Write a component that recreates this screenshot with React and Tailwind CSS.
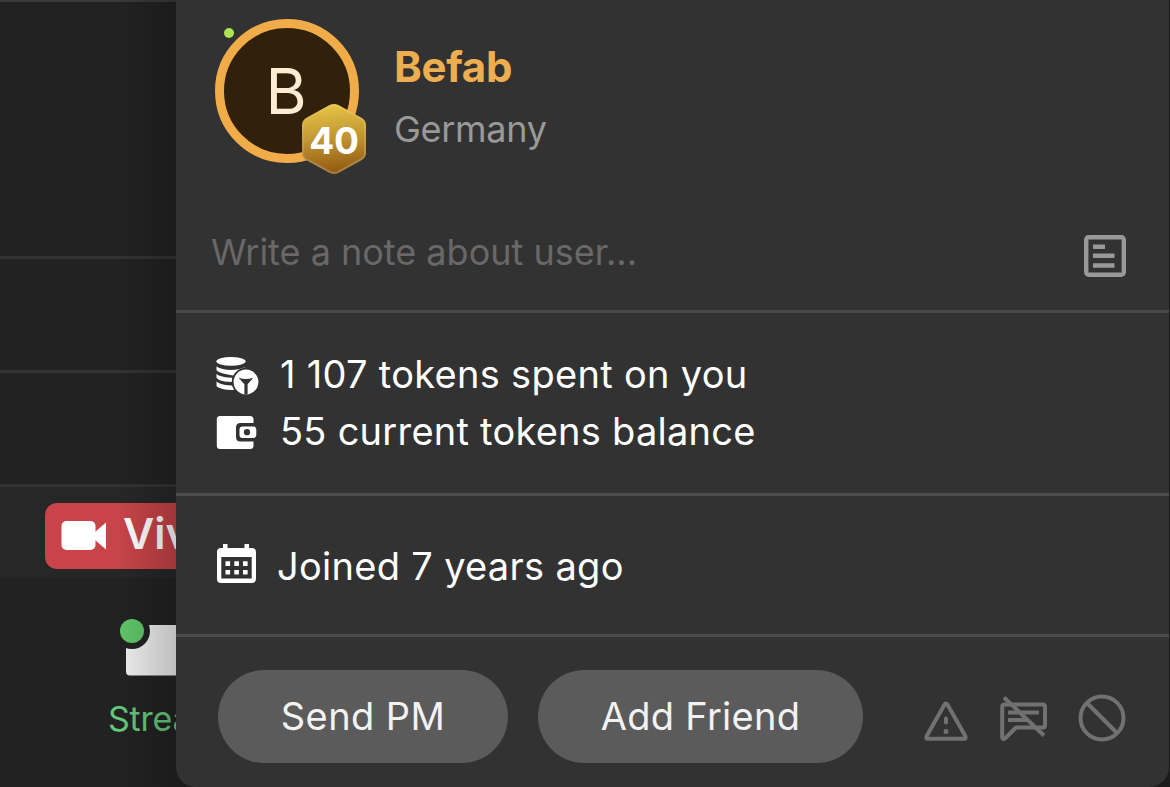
import React from 'react';

function TokensIcon() {
  return (
    <svg className="block h-[42px] w-[44px] shrink-0" viewBox="0 0 44 42" fill="none">
      <ellipse cx="16" cy="6.300" rx="14.600" ry="4.400" fill="#fff" />
      <path d="M1.500 11.500C5 13.800 10 14.900 16 14.900C21 14.900 26 14 29.500 12.300V20.500H18C11 19 4 18.500 1.500 15.100Z" fill="#fff" />
      <path d="M1.500 19C5 21.500 10 22.800 20 22.800V27C9 26.800 4 25.700 1.500 22.700Z" fill="#fff" />
      <path d="M1.500 26.500C5 29.200 10 30.500 20 30.500V35C9 35 4 33.500 1.500 31Z" fill="#fff" />
      <circle cx="31" cy="27" r="14.300" fill="#323232" />
      <circle cx="31" cy="27" r="12.400" fill="#fff" />
      <path d="M23.600 22.700Q31 25.100 38.400 22.700L32.600 29.200V39.400H29.400V29.200Z" fill="#323232" />
    </svg>
  );
}

function WalletIcon() {
  return (
    <svg className="block h-[36px] w-[44px] shrink-0" viewBox="0 0 44 36" fill="none">
      <path d="M5 1H35Q38.500 1 38.500 4.500V8H25.500Q21 8 21 12.500V22Q21 26.500 25.500 26.500H38.500V30.500Q38.500 34 35 34H5Q1.800 34 1.800 30.500V4.500Q1.800 1 5 1Z" fill="#fff" />
      <rect x="24.500" y="11.500" width="16.800" height="11.500" rx="3" fill="#fff" />
      <circle cx="32" cy="17.200" r="3.100" fill="#323232" />
    </svg>
  );
}

function CalendarIcon() {
  return (
    <svg className="block h-[42px] w-[44px] shrink-0" viewBox="0 0 44 42" fill="#fff">
      <path d="M8 1H12.500V5H29.500V1H34V5H36.500Q41 5 41 9V36Q41 40 36.500 40H6Q2 40 2 36V9Q2 5 6 5H8ZM6.300 14V35.500H36.700V14Z" fillRule="evenodd" />
      <path d="M10.500 18.300h4.600v4.600h-4.600zM19.300 18.300h4.600v4.600h-4.600zM28 18.300h4.600v4.600h-4.600zM10.500 27h4.600v4.600h-4.600zM19.300 27h4.600v4.600h-4.600zM28 27h4.600v4.600h-4.600z" />
    </svg>
  );
}

function NoteIcon() {
  return (
    <svg className="block size-[44px] shrink-0" viewBox="0 0 44 44" fill="none">
      <rect x="3.200" y="3.200" width="37.600" height="37.600" rx="2.500" stroke="#999" strokeWidth="4.400" />
      <path d="M10 12.700h12M10 21.800h21.500M10 31.500h21.500" stroke="#999" strokeWidth="4.600" />
    </svg>
  );
}

function WarningIcon() {
  return (
    <svg className="block h-[42px] w-[46px]" viewBox="0 0 46 42" fill="none" stroke="#717171">
      <path d="M21.300 5Q23 2.200 24.700 5L42.300 36Q43.500 38.800 41 38.800H5Q2.500 38.800 3.700 36Z" strokeWidth="4" strokeLinejoin="round" />
      <path d="M23 18.500V22.500" strokeWidth="4" strokeLinecap="round" />
      <path d="M23 29.200V33.800" strokeWidth="4.400" />
    </svg>
  );
}

function MuteChatIcon() {
  return (
    <svg className="block size-[50px]" viewBox="0 0 50 50" fill="none" stroke="#717171" strokeWidth="4">
      <path d="M5.500 10.500H44Q46 10.500 46 13V31Q46 33.500 44 33.500H17L6 44.500Q3.200 46 3.200 43V13Q3.200 10.500 5.500 10.500Z" strokeLinejoin="round" />
      <path d="M9 18.500H40M9 26H28" />
      <path d="M5 3.500L45 41.500" />
    </svg>
  );
}

function BlockIcon() {
  return (
    <svg className="block size-[48px]" viewBox="0 0 48 48" fill="none" stroke="#717171" strokeWidth="4">
      <circle cx="24" cy="24" r="21.500" />
      <path d="M8.500 8.500L39.500 39.500" />
    </svg>
  );
}

function Avatar() {
  return (
    <div className="relative size-[144px] shrink-0">
      <div className="flex size-[144px] items-center justify-center rounded-full border-[9px] border-[#f0ac48] bg-[#31210c] text-[63px] leading-none text-[#ffecd5]">
        <span className="-translate-x-px">B</span>
      </div>
      <div className="absolute left-[9px] top-[9px] size-[10px] rounded-full bg-[#ade454]" />
      <div className="absolute left-[86px] top-[84px] flex h-[72px] w-[66px] items-center justify-center">
        <svg className="absolute inset-0" width="66" height="72" viewBox="0 0 66 72">
          <defs>
            <linearGradient id="gold" x1="0.450" y1="0" x2="0.550" y2="1">
              <stop offset="0" stopColor="#e5c346" />
              <stop offset="0.500" stopColor="#c09433" />
              <stop offset="1" stopColor="#91580f" />
            </linearGradient>
            <linearGradient id="rim" x1="0" y1="0" x2="0" y2="1">
              <stop offset="0" stopColor="#ecc850" />
              <stop offset="1" stopColor="#a27842" />
            </linearGradient>
          </defs>
          <path d="M29 3Q33 1 37 3L60 15.500Q64 18 64 22V50Q64 54 60 56.500L37 69Q33 71 29 69L6 56.500Q2 54 2 50V22Q2 18 6 15.500Z" fill="url(#gold)" stroke="url(#rim)" strokeWidth="2" />
        </svg>
        <span className="relative pt-[3px] text-[37px] font-bold leading-none tracking-[-0.3px] text-white">40</span>
      </div>
    </div>
  );
}

function Sidebar() {
  return (
    <aside className="relative h-[787px] w-[176px] shrink-0 overflow-hidden bg-[#222]">
      <div className="h-[2px] bg-[#393939]" />
      <div className="h-[257px] border-b-[3px] border-[#333]" />
      <div className="h-[114px] border-b-[3px] border-[#333]" />
      <div className="h-[114px] border-b-[3px] border-[#333]" />
      <div className="h-[91px] bg-[#272727] pl-[45px] pt-[16px]">
        <div className="flex h-[66px] w-[240px] rounded-[12px] bg-[#c84448] pl-[16px]">
          <svg className="mt-[17px] block h-[32px] w-[46px] shrink-0" viewBox="0 0 46 32" fill="#fff">
            <rect x="0.500" y="1" width="34" height="29" rx="5" />
            <path d="M34 12L45 2.500V29.500L34 20Z" />
          </svg>
          <span className="ml-[16px] mt-[5px] text-[43px] font-semibold leading-[50px] text-white">Vivo</span>
        </div>
      </div>
      <div className="pl-[108px] pt-[40px]">
        <svg className="ml-[10px] block h-[60px] w-[70px]" viewBox="0 0 70 60">
          <path d="M8 7H70V57.500H12Q8 57.500 8 53.500Z" fill="#eee" />
          <circle cx="14" cy="13" r="18" fill="#222" />
          <circle cx="14" cy="13" r="12" fill="#60c568" />
        </svg>
        <div className="mt-[20px] text-[34px] leading-[42px] tracking-[-0.2px] text-[#65c77c]">Stream</div>
      </div>
      <div className="absolute inset-y-0 right-0 w-[60px] bg-linear-to-r from-black/0 to-black/20" />
    </aside>
  );
}

function Stat({ icon, children }) {
  return (
    <div className="flex h-[57px] items-center">
      {icon}
      {children}
    </div>
  );
}

export default function App() {
  return (
    <div className="flex h-[787px] w-[1170px] overflow-hidden bg-[#1c1c1c] font-['Inter',sans-serif]">
      <Sidebar />
      <main className="flex h-[787px] w-[993px] flex-col overflow-hidden rounded-b-[20px] bg-[#323232]">
        <section className="h-[313px] shrink-0 border-b-[3px] border-[#484848] pl-[39px] pr-[42px] pt-[19px]">
          <div className="flex">
            <Avatar />
            <div className="pl-[35px] pt-[22px]">
              <div className="text-[42px] font-bold leading-[52px] tracking-[-0.3px] text-[#ecae50]">Befab</div>
              <div className="mt-[13px] text-[36px] leading-[46px] tracking-[-0.3px] text-[#999]">Germany</div>
            </div>
          </div>
          <div className="-ml-[4px] mt-[64px] flex items-start justify-between">
            <span className="text-[36px] leading-[50px] text-[#686868]">Write a note about user...</span>
            <div className="mt-[7px]"><NoteIcon /></div>
          </div>
        </section>
        <section className="h-[183px] shrink-0 border-b-[3px] border-[#4c4c4c] pl-[39px] pt-[34px] text-[38px] tracking-[0.3px] text-white">
          <Stat icon={<TokensIcon />}><span className="pb-[2px] pl-[21px]">1 107 tokens spent on you</span></Stat>
          <Stat icon={<WalletIcon />}><span className="pb-[2px] pl-[21px] tracking-[0.25px]">55 current tokens balance</span></Stat>
        </section>
        <section className="flex h-[141px] shrink-0 border-b-[3px] border-[#4c4c4c] pl-[39px] text-[38px] tracking-[0.3px] text-white">
          <div className="pt-[47px]"><CalendarIcon /></div>
          <span className="pl-[18px] pt-[45px] leading-[50px]">Joined 7 years ago</span>
        </section>
        <section className="flex pl-[42px] pt-[33px]">
          <button className="h-[93px] w-[290px] rounded-full bg-[#5b5b5b] text-[38px] tracking-[0.4px] text-[#f2f2f2]">Send PM</button>
          <button className="ml-[30px] h-[93px] w-[325px] rounded-full bg-[#5b5b5b] text-[38px] tracking-[0.3px] text-[#f2f2f2]">Add Friend</button>
          <div className="ml-[60px] mt-[30px]"><WarningIcon /></div>
          <div className="ml-[30px] mt-[24px]"><MuteChatIcon /></div>
          <div className="ml-[29px] mt-[24px]"><BlockIcon /></div>
        </section>
      </main>
    </div>
  );
}
